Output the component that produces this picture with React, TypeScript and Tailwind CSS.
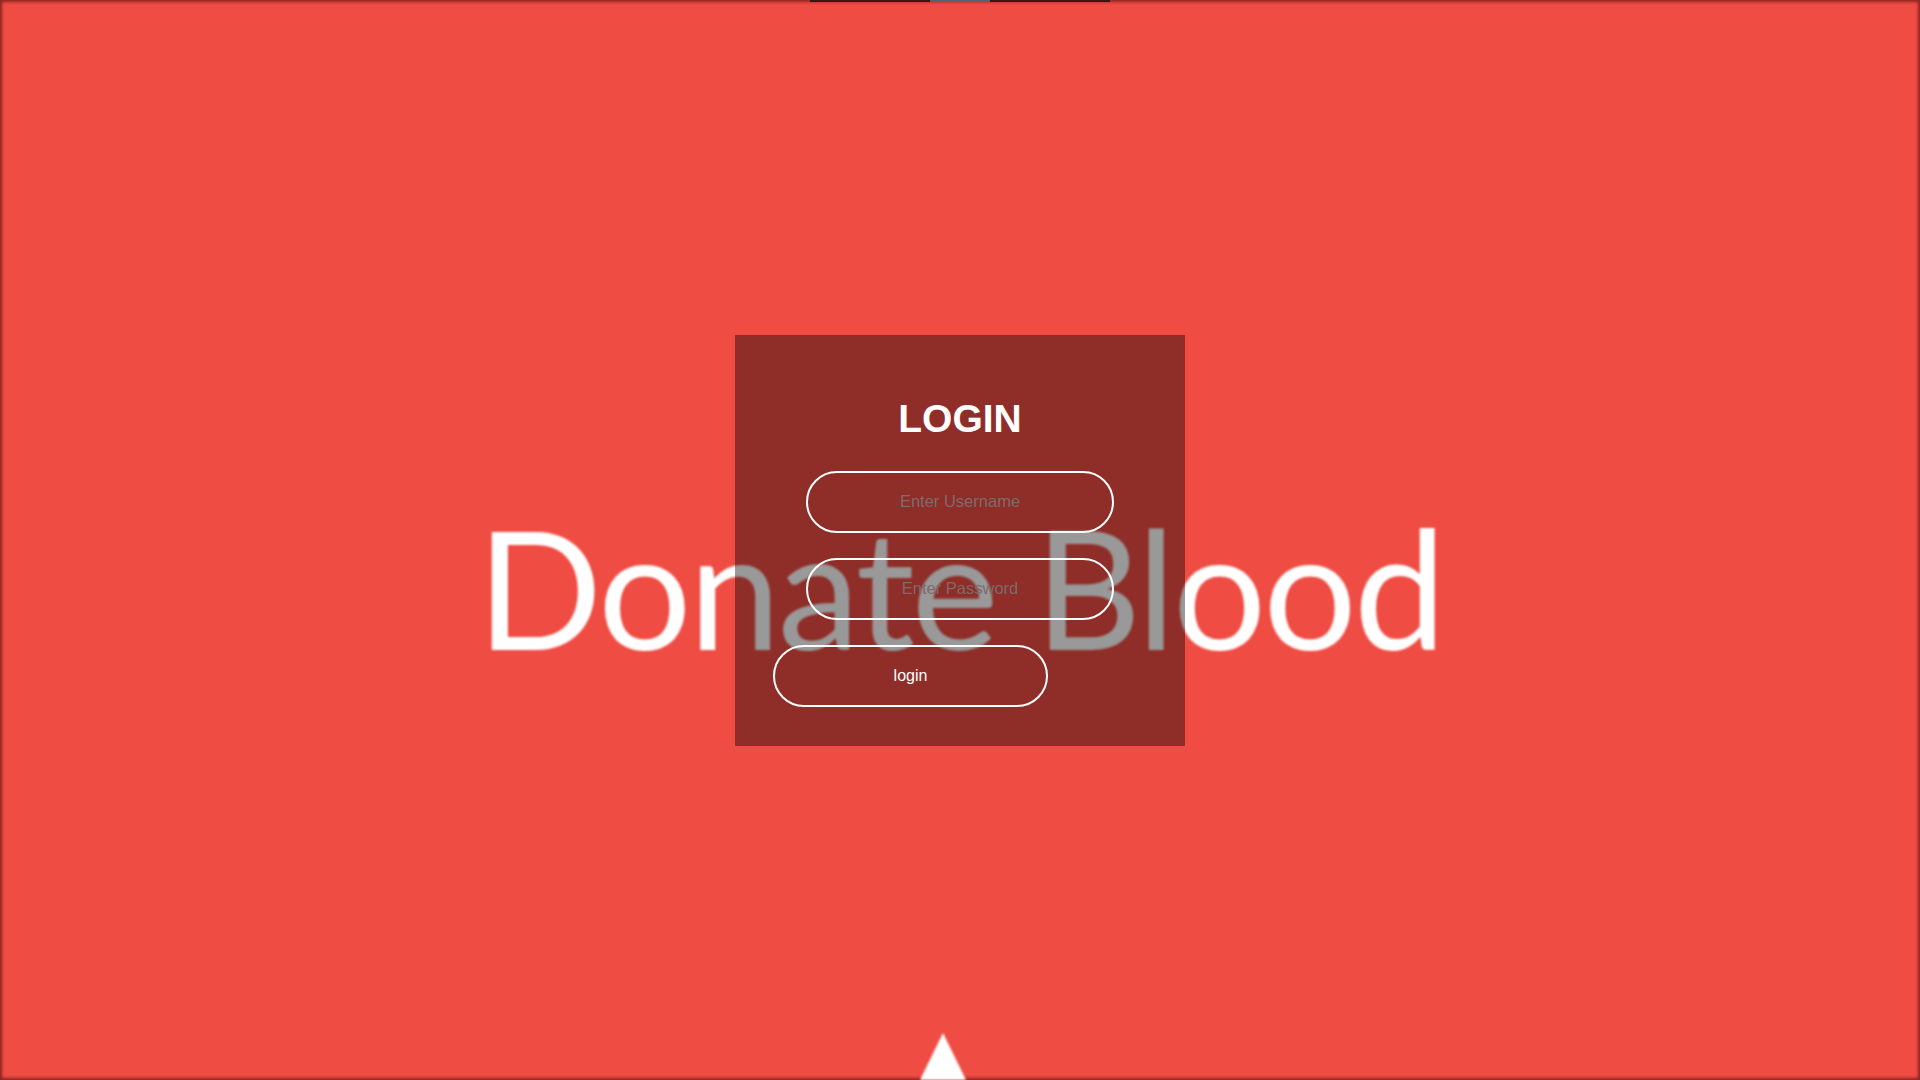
import React from "react";

export default function App() {
  return (
    <div className="relative h-[1080px] w-full overflow-hidden bg-[#ef4c43] font-['Liberation_Sans',Arial,sans-serif]">
      {/* background layer */}
      <div className="flex h-full w-full flex-col items-center shadow-[inset_0_0_3px_2px_rgba(110,25,20,0.75)]">
        <div className="flex h-[2px] w-[300px] bg-[#3b1714]">
          <div className="ml-[120px] h-full w-[60px] bg-[#5b6170]" />
        </div>
        <div className="mt-[502px] font-['Lato',sans-serif] text-[165px] leading-[165px] font-normal tracking-[-3px] text-white blur-[1px] whitespace-nowrap">
          Donate Blood
        </div>
        <div className="mt-auto">
          <svg width="80" height="50" viewBox="0 0 80 50" className="blur-[0.8px] -ml-[34px]">
            <polygon points="40,3 17,50 63,50" fill="#ffffff" />
          </svg>
        </div>
      </div>

      {/* login overlay */}
      <div className="absolute inset-0 flex items-center justify-center">
        <div className="flex h-[411px] w-[450px] flex-col items-center bg-[rgba(0,0,0,0.4)] pt-[61px]">
          <h1 className="text-[39px] leading-[45px] font-bold text-white">LOGIN</h1>
          <input
            type="text"
            placeholder="Enter Username"
            className="mt-[30px] h-[62px] w-[308px] rounded-full border-[2.5px] border-white bg-transparent text-center text-[16.5px] text-white outline-none placeholder:text-[#7e6b6a]"
          />
          <input
            type="password"
            placeholder="Enter Password"
            className="mt-[25px] h-[62px] w-[308px] rounded-full border-[2.5px] border-white bg-transparent text-center text-[16.5px] text-white outline-none placeholder:text-[#7e6b6a]"
          />
          <div className="mt-[25px] w-full pl-[38px]">
            <button className="h-[62px] w-[275px] rounded-full border-[2.5px] border-white bg-transparent text-[16px] text-white">
              login
            </button>
          </div>
        </div>
      </div>
    </div>
  );
}
